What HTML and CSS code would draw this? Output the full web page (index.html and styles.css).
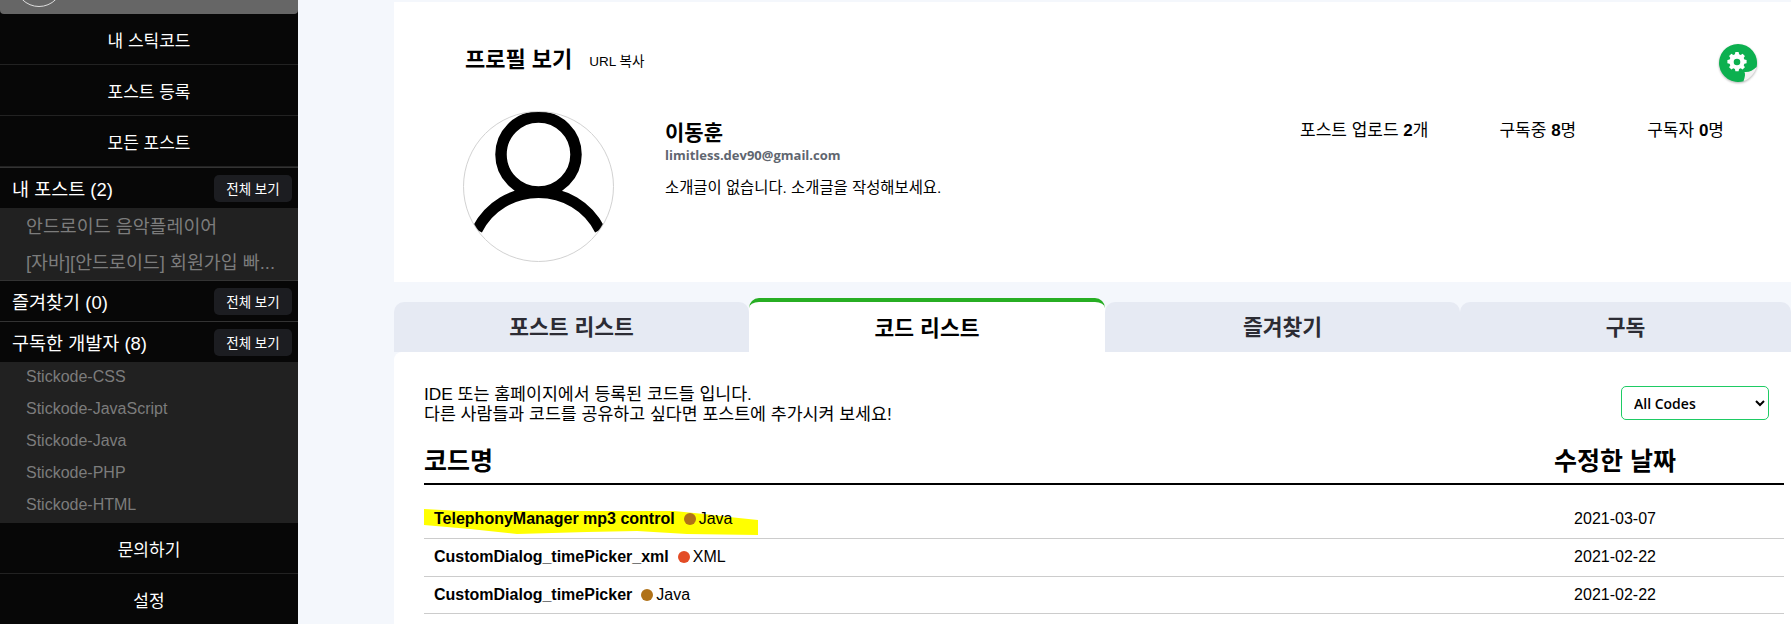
FILE: index.html
```html
<!DOCTYPE html>
<html lang="ko">
<head>
    <meta charset="UTF-8">
    <meta name="viewport" content="width=device-width, initial-scale=1.0">
    <title>프로필 보기</title>
    <link rel="stylesheet" href="styles.css">
</head>
<body>
    <div class="page">
        <aside class="sidebar">
            <div class="side-profile"><span class="side-avatar"></span></div>
            <a class="side-link">내 스틱코드</a>
            <a class="side-link">포스트 등록</a>
            <a class="side-link">모든 포스트</a>

            <div class="side-head">
                <span>내 포스트 (2)</span>
                <button class="side-btn" type="button">전체 보기</button>
            </div>
            <ul class="side-list">
                <li>안드로이드 음악플레이어</li>
                <li>[자바][안드로이드] 회원가입 빠...</li>
            </ul>

            <div class="side-head">
                <span>즐겨찾기 (0)</span>
                <button class="side-btn" type="button">전체 보기</button>
            </div>

            <div class="side-head">
                <span>구독한 개발자 (8)</span>
                <button class="side-btn" type="button">전체 보기</button>
            </div>
            <ul class="side-list side-list-authors">
                <li>Stickode-CSS</li>
                <li>Stickode-JavaScript</li>
                <li>Stickode-Java</li>
                <li>Stickode-PHP</li>
                <li>Stickode-HTML</li>
            </ul>

            <a class="side-link side-link-tail">문의하기</a>
            <a class="side-link side-link-tail">설정</a>
        </aside>

        <main class="main">
            <section class="profile-card">
                <div class="profile-title">
                    <h1>프로필 보기</h1>
                    <a class="url-copy">URL 복사</a>
                    <span class="gear-badge">
                        <svg viewBox="0 0 38 38" width="38" height="38">
                            <path d="M19 0 A19 19 0 0 1 37.6 23 C33 29 30 33 24.5 37.2 A19 19 0 1 1 19 0 Z" fill="#0cb04f"/>
                            <path d="M37.6 23 C36 29 31 35 24.5 37.2 C26 33 26.5 30 25.5 28 C30 28.5 34 26.5 37.6 23 Z" fill="#f2f2f2"/>
                            <path fill="#fff" fill-rule="evenodd" d="M16.4 8h3.2l.5 2.2 1.6.7 1.9-1.2 2.3 2.3-1.2 1.9.7 1.6 2.2.5v3.2l-2.2.5-.7 1.6 1.2 1.9-2.3 2.3-1.9-1.2-1.6.7-.5 2.2h-3.2l-.5-2.2-1.6-.7-1.9 1.2-2.3-2.3 1.2-1.9-.7-1.6-2.2-.5v-3.2l2.2-.5.7-1.6-1.2-1.9 2.3-2.3 1.9 1.2 1.6-.7zM18 14.7a3.3 3.3 0 1 0 0 6.6 3.3 3.3 0 0 0 0-6.6z"/>
                        </svg>
                    </span>
                </div>
                <div class="profile-body">
                    <div class="avatar">
                        <svg viewBox="0 0 151 151" width="151" height="151">
                            <circle cx="75.5" cy="43.5" r="37.5" fill="none" stroke="#000" stroke-width="11.5"/>
                            <path d="M14 119 C26 95 50 81.5 75.5 81.5 C101 81.5 125 95 137 119" fill="none" stroke="#000" stroke-width="11"/>
                        </svg>
                    </div>
                    <div class="profile-info">
                        <div class="profile-name">이동훈</div>
                        <div class="profile-email">limitless.dev90@gmail.com</div>
                        <p class="profile-bio">소개글이 없습니다. 소개글을 작성해보세요.</p>
                    </div>
                    <div class="stats">
                        <span>포스트 업로드 <b>2</b>개</span>
                        <span>구독중 <b>8</b>명</span>
                        <span>구독자 <b>0</b>명</span>
                    </div>
                </div>
            </section>

            <nav class="tabs">
                <a class="tab">포스트 리스트</a>
                <a class="tab active">코드 리스트</a>
                <a class="tab">즐겨찾기</a>
                <a class="tab">구독</a>
            </nav>

            <section class="code-panel">
                <div class="code-top">
                    <p>IDE 또는 홈페이지에서 등록된 코드들 입니다.<br>다른 사람들과 코드를 공유하고 싶다면 포스트에 추가시켜 보세요!</p>
                    <select class="code-filter">
                        <option>All Codes</option>
                    </select>
                </div>
                <div class="code-head">
                    <span>코드명</span>
                    <span class="date-col">수정한 날짜</span>
                </div>
                <div class="code-row marked">
                    <svg class="marker" viewBox="0 0 334 27" width="334" height="27">
                        <path fill="#ffff00" d="M0 0 L36 2 L146 2 L250 2 L280 5 L305 8 L334 11 L334 26 L263 25 L213 22 L163 23 L93 25 L46 20 L0 16 Z"/>
                    </svg>
                    <span class="code-name"><b>TelephonyManager mp3 control</b><i class="dot java"></i>Java</span>
                    <span class="date-col">2021-03-07</span>
                </div>
                <div class="code-row">
                    <span class="code-name"><b>CustomDialog_timePicker_xml</b><i class="dot xml"></i>XML</span>
                    <span class="date-col">2021-02-22</span>
                </div>
                <div class="code-row">
                    <span class="code-name"><b>CustomDialog_timePicker</b><i class="dot java"></i>Java</span>
                    <span class="date-col">2021-02-22</span>
                </div>
            </section>
        </main>
    </div>
</body>
</html>
```

FILE: styles.css
```css
* {
    box-sizing: border-box;
}
html, body {
    height: 624px;
    margin: 0;
    overflow: hidden;
}
body {
    font-family: "Liberation Sans", "Noto Sans CJK KR", sans-serif;
    background: #f4f7fc;
    color: #000;
}
.page {
    display: flex;
    height: 624px;
}

/* sidebar */
.sidebar {
    width: 298px;
    flex-shrink: 0;
    background: #070707;
    color: #fff;
    overflow: hidden;
}
.side-profile {
    height: 14px;
    background: #666;
    border-radius: 0 0 4px 4px;
    overflow: hidden;
    padding-left: 15px;
}
.side-avatar {
    display: block;
    width: 48px;
    height: 48px;
    margin-top: -41px;
    border: 1px solid #ddd;
    border-radius: 50%;
}
.side-link {
    display: flex;
    align-items: center;
    justify-content: center;
    height: 51px;
    font-size: 17px;
    border-bottom: 1px solid #222;
}
.side-link-tail:last-child {
    border-bottom: none;
}
.side-head {
    display: flex;
    align-items: center;
    justify-content: space-between;
    height: 41px;
    padding: 0 6px 0 12px;
    font-size: 18.5px;
    border-top: 1px solid #333;
}
.side-btn {
    width: 78px;
    height: 27px;
    padding: 0;
    border: none;
    border-radius: 5px;
    background: #1c1d21;
    color: #fff;
    font-family: inherit;
    font-size: 13.5px;
}
.side-list {
    list-style: none;
    margin: 0;
    padding: 0 0 0 26px;
    background: #212121;
    color: #7c7c7c;
    font-size: 18.4px;
}
.side-list li {
    height: 36px;
    line-height: 38px;
    white-space: nowrap;
}
.side-list-authors {
    height: 161px;
    font-size: 16px;
}
.side-list-authors li {
    height: 32px;
    line-height: 30px;
}

/* main column */
.main {
    flex: 1;
    min-width: 0;
    padding: 2px 0 0 96px;
}
.profile-card {
    position: relative;
    height: 280px;
    background: #fff;
    padding: 41px 0 0 69px;
}
.profile-title {
    display: flex;
    align-items: center;
    height: 28px;
    padding-left: 2px;
}
.profile-title h1 {
    margin: 0;
    font-size: 22px;
    font-weight: 700;
}
.url-copy {
    margin-left: 17px;
    margin-top: 5px;
    font-size: 13.5px;
}
.gear-badge {
    position: absolute;
    top: 42px;
    right: 34px;
    width: 38px;
    height: 38px;
    filter: drop-shadow(0 1px 1px rgba(0,0,0,0.3));
}
.profile-body {
    display: flex;
    margin-top: 40px;
}
.avatar {
    width: 151px;
    height: 151px;
    flex-shrink: 0;
    border: 1px solid #d2d2d2;
    border-radius: 50%;
    overflow: hidden;
}
.avatar svg {
    display: block;
    margin: -1px;
}
.profile-info {
    margin-left: 51px;
    padding-top: 9px;
}
.profile-name {
    font-size: 21px;
    font-weight: 700;
    line-height: 26px;
}
.profile-email {
    font-family: "Open Sans", sans-serif;
    font-size: 13px;
    font-weight: 700;
    line-height: 18px;
    color: #5f6670;
}
.profile-bio {
    margin: 15px 0 0;
    font-size: 15.4px;
    line-height: 18px;
}
.stats {
    display: flex;
    gap: 71px;
    margin-left: auto;
    padding: 11px 67px 0 0;
    font-size: 17px;
    line-height: 18px;
}

/* tabs */
.tabs {
    display: flex;
    align-items: flex-end;
    height: 54px;
    margin-top: 16px;
}
.tab {
    display: flex;
    align-items: center;
    justify-content: center;
    height: 50px;
    width: 355px;
    padding-bottom: 3px;
    background: #e6eaf3;
    border-radius: 10px 10px 0 0;
    font-size: 21.5px;
    font-weight: 700;
    color: #2c2c34;
}
.tab:last-child {
    flex: 1;
}
.tab.active {
    width: 356px;
    height: 54px;
    padding-bottom: 1px;
    background: #fff;
    border-top: 4px solid #27ae23;
    color: #000;
}

/* code list */
.code-panel {
    background: #fff;
    height: 272px;
    border-radius: 8px 0 0 0;
    padding: 32px 7px 0 30px;
}
.code-top {
    display: flex;
    justify-content: space-between;
    align-items: flex-start;
    padding-right: 15px;
}
.code-top p {
    margin: 0;
    font-size: 17.3px;
    line-height: 20px;
}
.code-filter {
    width: 148px;
    height: 34px;
    margin-top: 2px;
    padding-left: 8px;
    border: 1px solid #1ecb64;
    border-radius: 5px;
    background: #fff;
    color: #000;
    font-family: "Open Sans", sans-serif;
    font-size: 14px;
    font-weight: 600;
}
.code-head {
    display: flex;
    justify-content: space-between;
    align-items: center;
    height: 46px;
    margin-top: 15px;
    padding-bottom: 4px;
    border-bottom: 2px solid #000;
    font-size: 25px;
    font-weight: 700;
}
.code-row {
    position: relative;
    display: flex;
    justify-content: space-between;
    align-items: center;
    height: 37.5px;
    font-size: 16px;
    border-bottom: 1px solid #ccc;
}
.code-row.marked {
    height: 54px;
    padding-top: 15px;
}
.marker {
    position: absolute;
    left: 0;
    top: 24px;
}
.code-name {
    position: relative;
    display: flex;
    align-items: center;
    padding-left: 10px;
}
.dot {
    width: 12px;
    height: 12px;
    margin: 0 3px 0 9px;
    border-radius: 50%;
}
.dot.java {
    background: #b07219;
}
.dot.xml {
    background: #e34c26;
}
.date-col {
    position: relative;
    width: 138px;
    margin-right: 100px;
    text-align: center;
    white-space: nowrap;
}
```
